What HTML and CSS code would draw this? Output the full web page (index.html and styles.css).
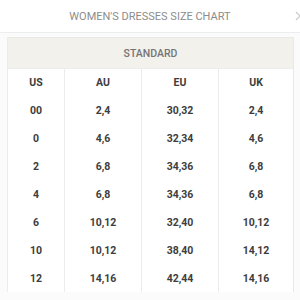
FILE: index.html
```html
<!DOCTYPE html>
<html lang="en">
<head>
    <meta charset="UTF-8">
    <meta name="viewport" content="width=device-width, initial-scale=1.0">
    <title>Women's Dresses Size Chart</title>
    <link rel="stylesheet" href="styles.css">
</head>
<body>
    <div class="modal">
        <header class="modal-head">
            <h1>Women's Dresses Size Chart</h1>
            <!-- close button, clipped by the modal edge -->
            <svg class="close" width="10" height="10" viewBox="0 0 10 10">
                <path d="M1 1 L9 9 M9 1 L1 9" stroke="#c8c8c8" stroke-width="1.1" fill="none"/>
            </svg>
        </header>
        <div class="chart">
            <table class="size-table">
                <colgroup>
                    <col class="col-us">
                    <col class="col-au">
                    <col class="col-eu">
                    <col class="col-uk">
                </colgroup>
                <thead>
                    <tr class="group-row"><th colspan="4">Standard</th></tr>
                    <tr class="label-row">
                        <th>US</th><th>AU</th><th>EU</th><th>UK</th>
                    </tr>
                </thead>
                <tbody>
                    <tr><td>00</td><td>2,4</td><td>30,32</td><td>2,4</td></tr>
                    <tr><td>0</td><td>4,6</td><td>32,34</td><td>4,6</td></tr>
                    <tr><td>2</td><td>6,8</td><td>34,36</td><td>6,8</td></tr>
                    <tr><td>4</td><td>6,8</td><td>34,36</td><td>6,8</td></tr>
                    <tr><td>6</td><td>10,12</td><td>32,40</td><td>10,12</td></tr>
                    <tr><td>10</td><td>10,12</td><td>38,40</td><td>14,12</td></tr>
                    <tr><td>12</td><td>14,16</td><td>42,44</td><td>14,16</td></tr>
                </tbody>
            </table>
        </div>
    </div>
</body>
</html>
```

FILE: styles.css
```css
body {
    margin: 0;
    font-family: Roboto, "Liberation Sans", Arial, sans-serif;
    background-color: #fbfbfb;
    color: #444;
}
.modal {
    width: 300px;
    height: 300px;
    overflow: hidden;
}
.modal-head {
    position: relative;
    height: 32px;
    display: flex;
    align-items: center;
    justify-content: center;
    border-bottom: 1px solid #ededed;
    background-color: #fff;
}
.modal-head h1 {
    margin: 0;
    font-size: 11px;
    font-weight: 400;
    text-transform: uppercase;
    color: #8c8c8c;
}
.close {
    position: absolute;
    right: -5px;
    top: 11px;
}
.chart {
    padding: 4px 7px 0 7px;
}
.size-table {
    width: 286px;
    border-collapse: collapse;
    table-layout: fixed;
    background-color: #fff;
    border: 1px solid #e8e8e8;
    border-bottom: none;
}
.col-us { width: 57px; }
.col-au { width: 77px; }
.col-eu { width: 77px; }
.col-uk { width: 75px; }
.size-table th,
.size-table td {
    text-align: center;
    padding: 0;
    font-size: 10.5px;
    font-weight: 700;
    color: #3d3d3d;
    border-left: 1px solid #ececec;
}
.group-row th {
    height: 30px;
    background-color: #f3f1ec;
    color: #757575;
    font-weight: 500;
    text-transform: uppercase;
    border-bottom: 1px solid #ececec;
}
.label-row th {
    height: 27px;
}
.size-table td {
    height: 28px;
}
```
